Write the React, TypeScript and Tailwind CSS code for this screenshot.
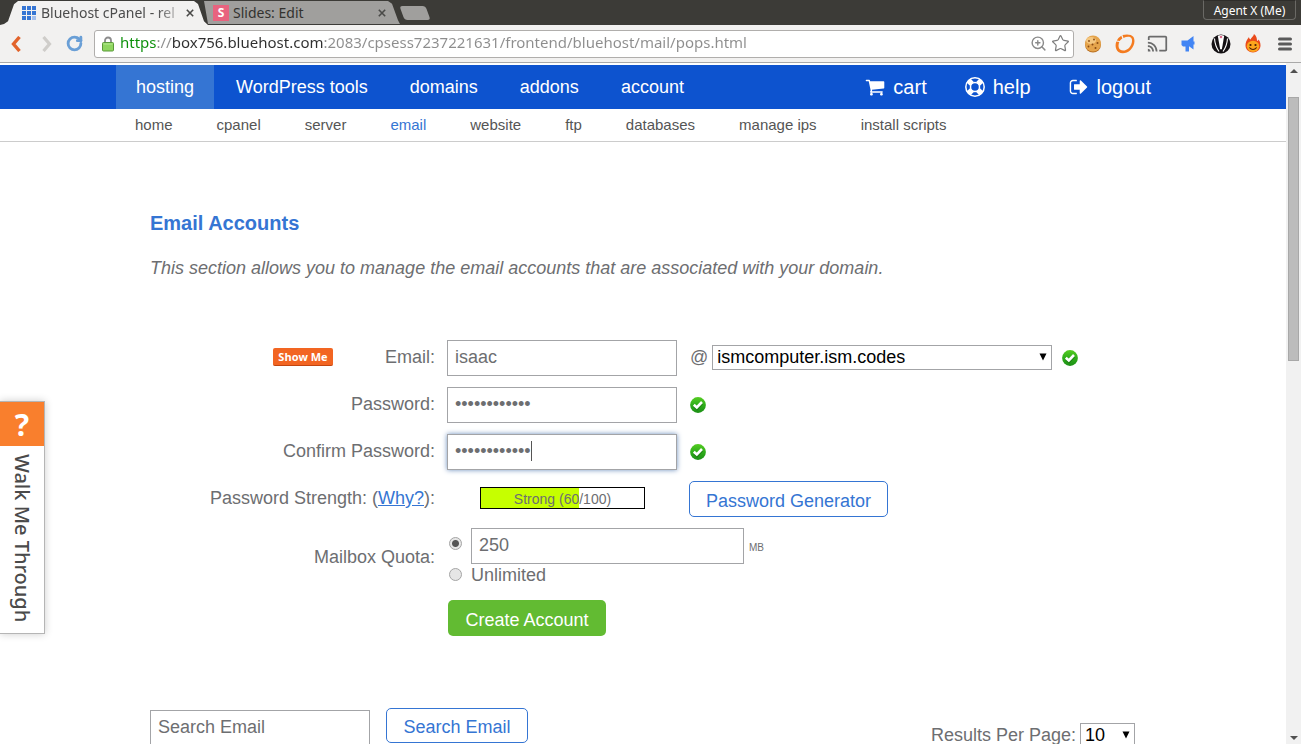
import React from 'react';
import { MdCast } from 'react-icons/md';
import { RotateCw, Star, ZoomIn } from 'lucide-react';

const mainLinks = ['hosting', 'WordPress tools', 'domains', 'addons', 'account'];

const subLinks = [
  'home',
  'cpanel',
  'server',
  'email',
  'website',
  'ftp',
  'databases',
  'manage ips',
  'install scripts',
];

function CartIcon() {
  return (
    <svg viewBox="0 0 1792 1792" className="w-5 h-5" fill="currentColor" aria-hidden="true">
      <path d="M704 1536q0 52-38 90t-90 38-90-38-38-90 38-90 90-38 90 38 38 90zm896 0q0 52-38 90t-90 38-90-38-38-90 38-90 90-38 90 38 38 90zm128-1088v512q0 24-16.500 42.500t-40.500 21.500l-1044 122q13 60 13 70 0 16-24 64h920q26 0 45 19t19 45-19 45-45 19H512q-26 0-45-19t-19-45q0-11 8-31.500t16-36 21.500-40 15.500-29.500L332 384H128q-26 0-45-19t-19-45 19-45 45-19h256q16 0 28.500 6.500t19.500 15.500 13 24.500 8 26 5.500 29.500 4.500 26h1201q26 0 45 19t19 45z" />
    </svg>
  );
}

function HelpIcon() {
  return (
    <svg viewBox="0 0 20 20" className="w-5 h-5" fill="none" aria-hidden="true">
      <circle cx="10" cy="10" r="9.200" stroke="currentColor" strokeWidth="1.500" />
      <circle cx="10" cy="10" r="4.500" stroke="currentColor" strokeWidth="1.500" />
      <g stroke="currentColor" strokeWidth="5.500">
        <path d="M3.500 3.500l3.400 3.400M16.500 3.500l-3.400 3.400M3.500 16.500l3.400-3.400M16.500 16.500l-3.400-3.400" />
      </g>
    </svg>
  );
}

function LogoutIcon() {
  return (
    <svg viewBox="0 0 1792 1792" className="w-5 h-5" fill="currentColor" aria-hidden="true">
      <path d="M704 1440q0 4 1 20t.5 26.500-3 23.500-10 19.500-20.500 6.500h-320q-119 0-203.500-84.500T64 1248V544q0-119 84.500-203.500T352 256h320q13 0 22.500 9.500T704 288q0 4 1 20t.5 26.500-3 23.500-10 19.500T672 384H352q-66 0-113 47t-47 113v704q0 66 47 113t113 47h312l11.500 1 11.500 3 8 5.500 7 9 2 13.500zm928-544q0 26-19 45l-544 544q-19 19-45 19t-45-19-19-45v-288H512q-26 0-45-19t-19-45V704q0-26 19-45t45-19h448V352q0-26 19-45t45-19 45 19l544 544q19 19 19 45z" />
    </svg>
  );
}

function CheckIcon() {
  return (
    <svg viewBox="0 0 16 16" className="w-4 h-4 shrink-0" role="img" aria-label="Valid">
      <defs>
        <linearGradient id="check-green" x1="0" y1="0" x2="0" y2="1">
          <stop offset="0" stopColor="#55cc22" />
          <stop offset="0.5" stopColor="#2fae1a" />
          <stop offset="1" stopColor="#1c8f16" />
        </linearGradient>
      </defs>
      <circle cx="8" cy="8" r="7.900" fill="url(#check-green)" />
      <path d="M4 9l3 2.800 5.300-5.600" stroke="#14690f" strokeWidth="2.600" fill="none" opacity="0.6" />
      <path d="M3.800 7.700l3 2.800 5.200-5.500" stroke="#fff" strokeWidth="2.600" fill="none" />
    </svg>
  );
}

function GridIcon() {
  return (
    <svg viewBox="0 0 14 14" className="w-3.5 h-3.5 shrink-0" fill="#3575d3" aria-hidden="true">
      <path d="M0 0h4v4H0zM5 0h4v4H5zM10 0h4v4h-4zM0 5h4v4H0zM5 5h4v4H5zM10 5h4v4h-4zM0 10h4v4H0zM5 10h4v4H5z" />
      <path d="M10 10h4v4h-4z" fill="#a3bfec" />
    </svg>
  );
}

function CloseIcon() {
  return (
    <svg viewBox="0 0 8 8" className="w-2 h-2" stroke="#4a4a48" strokeWidth="1.600" aria-hidden="true">
      <path d="M0.800 0.800l6.400 6.400M7.200 0.800l-6.400 6.400" />
    </svg>
  );
}

function LockIcon() {
  return (
    <svg viewBox="0 0 12 16" className="w-3 h-4 shrink-0" aria-hidden="true">
      <path d="M3 7V4.500a3 3 0 0 1 6 0V7" fill="none" stroke="#8c8c8c" strokeWidth="1.800" />
      <rect x="0.500" y="6.500" width="11" height="8.500" rx="1" fill="#8fd65f" stroke="#5a9a3a" />
      <path d="M1.500 8h9" stroke="#b8ea94" />
    </svg>
  );
}

function CookieIcon() {
  return (
    <svg viewBox="0 0 18 18" className="w-[18px] h-[18px]" aria-hidden="true">
      <circle cx="9" cy="9.500" r="8" fill="#b96f22" />
      <circle cx="9" cy="8.500" r="8" fill="#e5a44c" />
      <ellipse cx="7" cy="5.500" rx="5" ry="3.500" fill="#f4c780" />
      <g fill="#8a4a14">
        <circle cx="5" cy="6" r="0.900" />
        <circle cx="10" cy="4.500" r="0.900" />
        <circle cx="13.500" cy="8" r="1" />
        <circle cx="8.500" cy="9.500" r="1" />
        <circle cx="4.500" cy="11.500" r="0.900" />
        <circle cx="11.500" cy="13" r="1" />
      </g>
    </svg>
  );
}

function SwirlIcon() {
  return (
    <svg viewBox="0 0 20 20" className="w-5 h-5" aria-hidden="true">
      <path
        fillRule="evenodd"
        fill="#f47b20"
        d="M7.500 1C12 0 16.500.3 18.500 3c2.200 4 .5 9.500-3 13-3.500 3.300-8.500 4.300-12 2C.3 15.500 0 11 1.300 7.500L4.300 8C3.300 10.500 3 13.500 5 15.500c2.500 2 6.500 1 9-1.500 2.700-3 4-7.500 2.300-10C15 2.300 11.500 2.500 8.500 4z"
      />
      <path d="M1.800 6.500Q3.200 3.500 6.300 1.700L7.300 4.500Q5.500 5.500 4.700 7z" fill="#f47b20" />
    </svg>
  );
}

function MegaphoneIcon() {
  return (
    <svg viewBox="0 0 14 16" className="w-3.5 h-4 mr-[2px]" fill="#4285f4" aria-hidden="true">
      <path d="M.5 4.500h6L12.500 0v13.500L8 10.300V15.500H4.500V10.500H2L.5 9z" />
      <path d="M12 5.500h1.500v3H12z" />
    </svg>
  );
}

function BadgerIcon() {
  return (
    <svg viewBox="0 0 20 20" className="w-5 h-5" aria-hidden="true">
      <circle cx="10" cy="10" r="9.500" fill="#141114" />
      <path d="M6.800 1.800L10 1l3.200.8L11 14.500l-1 1.200-1-1.200z" fill="#fff" />
      <path d="M3.500 4.500Q4 12 8 17.500M16.500 4.500Q16 12 12 17.500" stroke="#fff" strokeWidth="1.100" fill="none" />
      <path d="M8.500 3L10 1.500 11.500 3 10 4.500z" fill="#d9587c" />
    </svg>
  );
}

function FlameIcon() {
  return (
    <svg viewBox="0 0 16 19" className="w-4 h-[19px]" aria-hidden="true">
      <path d="M9 0c-.5 2.500-3 3.500-3.500 5.500C4.500 5 4 4 4 3 1.500 6 .5 8.500.5 11.500.5 15.500 4 18.500 8 18.500s7.500-3 7.500-7c0-3-1-5-2-6-.3 1-.8 1.300-1.500 1.500C12 4.500 11.500 1.500 9 0z" fill="#ea4a1b" />
      <ellipse cx="8" cy="12.300" rx="6.200" ry="5.600" fill="#fba51c" />
      <circle cx="5.500" cy="11" r="1.100" fill="#4b1a05" />
      <circle cx="10.500" cy="11" r="1.100" fill="#4b1a05" />
      <path d="M4.300 13.500q3.700 4 7.400 0" stroke="#4b1a05" strokeWidth="1.100" fill="none" />
    </svg>
  );
}

function TabStrip() {
  return (
    <div className="flex h-[25px] bg-[#3c3b37] text-sm">
      <div className="relative z-10 flex items-center w-[208px] shrink-0 pl-[22px] pr-3.5 mt-px bg-[#f2f1f0] text-[#4c4c4c] [clip-path:polygon(0_100%,4px_96%,8px_84%,14px_14%,18px_0,194px_0,198px_12%,204px_84%,208px_100%)]">
        <GridIcon />
        <span className="flex-1 ml-[5px] whitespace-nowrap [mask-image:linear-gradient(to_right,black_80%,transparent)]">
          Bluehost cPanel - rel
        </span>
        <button type="button" aria-label="Close Bluehost cPanel">
          <CloseIcon />
        </button>
      </div>
      <div className="flex items-center w-[196px] shrink-0 -ml-1 pl-[9px] pr-3.5 mt-px mb-px bg-[#a09f9d] text-[#33322f] [clip-path:polygon(0_0,184px_0,188px_12%,194px_84%,196px_100%,4px_100%)]">
        <span className="flex items-center justify-center w-4 h-4 bg-[#e8637f] text-white text-xs font-bold">S</span>
        <span className="flex-1 ml-[4px]">Slides: Edit</span>
        <button type="button" aria-label="Close Slides: Edit">
          <CloseIcon />
        </button>
      </div>
      <button
        type="button"
        aria-label="New tab"
        className="w-[26px] h-3.5 ml-[2px] mt-1.5 rounded-[3px] bg-[#a09f9d] skew-x-[20deg]"
      />
      <button
        type="button"
        className="ml-auto mr-[5px] h-5 w-[93px] shrink-0 pt-[2px] rounded-b border border-t-[#2e2d2a] border-[#6a6965] text-white text-xs"
      >
        Agent X (Me)
      </button>
    </div>
  );
}

function Toolbar() {
  return (
    <div className="flex items-center h-[38px] border-b border-[#a9a9a9] bg-[#f2f1f0]">
      <div className="flex items-center w-[94px] shrink-0 pl-[10px]">
        <button type="button" aria-label="Back">
          <svg viewBox="0 0 12 16" className="w-3 h-4" fill="none" stroke="#e2632b" strokeWidth="3.400">
            <path d="M9.500 1L3.500 8l6 7" />
          </svg>
        </button>
        <button type="button" aria-label="Forward" className="ml-[19px]">
          <svg viewBox="0 0 12 16" className="w-3 h-4" fill="none" stroke="#cfcdca" strokeWidth="3.200">
            <path d="M2.500 1l6 7-6 7" />
          </svg>
        </button>
        <button type="button" aria-label="Reload" className="ml-[13px]">
          <RotateCw size={17} strokeWidth={4} color="#6a9fd6" />
        </button>
      </div>
      <div className="flex flex-1 items-center h-7 pl-[7px] pr-[3px] rounded-[3px] border border-[#b0aeac] bg-white">
        <LockIcon />
        <input
          type="text"
          aria-label="Address"
          defaultValue="https://box756.bluehost.com:2083/cpsess7237221631/frontend/bluehost/mail/pops.html"
          className="flex-1 min-w-0 ml-[6px] pb-[2px] text-[15px] outline-none text-transparent bg-clip-text bg-[linear-gradient(to_right,#0a8f08_36px,#8d8d8d_36px,#8d8d8d_51px,#2f2f2f_51px,#2f2f2f_203px,#8d8d8d_203px)]"
        />
        <button type="button" aria-label="Zoom">
          <ZoomIn size={17} strokeWidth={2} color="#8a8a8a" />
        </button>
        <button type="button" aria-label="Bookmark" className="ml-1">
          <Star size={19} strokeWidth={1.500} color="#7d7d7d" />
        </button>
      </div>
      <div className="flex shrink-0 ml-[3px]">
        <button type="button" aria-label="Cookies" className="flex w-8 h-5 items-center justify-center"><CookieIcon /></button>
        <button type="button" aria-label="Swirl" className="flex w-8 h-5 items-center justify-center"><SwirlIcon /></button>
        <button type="button" aria-label="Cast" className="flex w-8 h-5 items-center justify-center text-[#6b6b6b]"><MdCast size={21} /></button>
        <button type="button" aria-label="Announcements" className="flex w-8 h-5 items-center justify-center"><MegaphoneIcon /></button>
        <button type="button" aria-label="Badger" className="flex w-8 h-5 items-center justify-center"><BadgerIcon /></button>
        <button type="button" aria-label="Flame" className="flex w-8 h-5 items-center justify-center"><FlameIcon /></button>
        <button type="button" aria-label="Menu" className="flex w-8 h-5 items-center justify-center">
          <svg viewBox="0 0 14 14" className="w-3.5 h-3.5" stroke="#5a5a5a" strokeWidth="3" strokeLinecap="round">
            <path d="M1.500 2h11M1.500 7h11M1.500 12h11" />
          </svg>
        </button>
      </div>
    </div>
  );
}

function SiteHeader() {
  return (
    <header className="mt-[2px]">
      <nav aria-label="Main" className="bg-[#0d53cf] text-white">
        <div className="flex w-full max-w-[1054px] h-11 mx-auto">
          <div className="flex gap-[2px] text-lg">
            {mainLinks.map((label, i) => (
              <a
                key={label}
                href="#"
                className={`flex items-center px-5 whitespace-nowrap ${i === 0 ? 'bg-[#3575d3]' : ''}`}
              >
                {label}
              </a>
            ))}
          </div>
          <div className="flex items-center gap-[38px] ml-auto pr-[19px] text-xl">
            <a href="#" className="flex items-center gap-2"><CartIcon />cart</a>
            <a href="#" className="flex items-center gap-2"><HelpIcon />help</a>
            <a href="#" className="flex items-center gap-2"><LogoutIcon />logout</a>
          </div>
        </div>
      </nav>
      <nav aria-label="Hosting" className="border-b border-[#ccc]">
        <div className="flex items-center gap-11 w-full max-w-[1054px] h-8 mx-auto pl-[19px] text-[15px] text-[#555]">
          {subLinks.map((label) => (
            <a key={label} href="#" className={`whitespace-nowrap ${label === 'email' ? 'text-[#3575d3]' : ''}`}>
              {label}
            </a>
          ))}
        </div>
      </nav>
    </header>
  );
}

function SelectArrow() {
  return (
    <svg
      viewBox="0 0 8 8"
      className="absolute right-[5px] top-2 w-2 h-2 pointer-events-none"
      fill="#000"
      aria-hidden="true"
    >
      <path d="M0.500 0.500h7L4 7.500z" />
    </svg>
  );
}

function AccountForm() {
  const field = 'w-[230px] h-9 px-[7px] pb-[2px] border border-[#a3a4a7] bg-white outline-none';
  const radio =
    'appearance-none w-[13px] h-[13px] shrink-0 rounded-full border border-[#a5a5a5] bg-[#e6e6e6] checked:bg-[radial-gradient(circle,#555_3px,#e6e6e6_4px)]';
  const strength = 60;

  return (
    <form className="grid grid-cols-[285px_1fr] items-center gap-x-3 gap-y-[11px] mt-[58px]">
      <div className="flex items-center justify-end pb-[2px]">
        <button
          type="button"
          className="w-[60px] h-[18px] mr-[52px] rounded-[2px] border-b border-[#c24510] bg-[#f26522] text-white text-[11px] leading-4 font-bold font-['Open_Sans',sans-serif]"
        >
          Show Me
        </button>
        <label htmlFor="email">Email:</label>
      </div>
      <div className="flex items-center">
        <input id="email" type="text" defaultValue="isaac" className={field} />
        <span className="ml-[13px] pb-[2px]">@</span>
        <div className="relative w-[340px] ml-[4px] mb-[2px]">
          <select
            aria-label="Domain"
            className="block appearance-none w-full h-[25px] px-1 border border-[#a3a4a7] bg-white text-black leading-[21px]"
          >
            <option>ismcomputer.ism.codes</option>
          </select>
          <SelectArrow />
        </div>
        <span className="ml-[10px]"><CheckIcon /></span>
      </div>

      <label htmlFor="password" className="pb-[2px] text-right">Password:</label>
      <div className="flex items-center gap-[13px]">
        <input id="password" type="password" defaultValue="correcthorse" className={field} />
        <CheckIcon />
      </div>

      <label htmlFor="confirm" className="pb-[2px] text-right">Confirm Password:</label>
      <div className="flex items-center gap-[13px]">
        <div className="relative">
          <input
            id="confirm"
            type="password"
            defaultValue="correcthorse"
            className={`${field} block shadow-[0_0_5px_#6c8fbd]`}
          />
          <span className="absolute left-[84px] top-[7px] w-px h-5 bg-[#555]" />
        </div>
        <CheckIcon />
      </div>

      <div className="pb-[2px] text-right">
        Password Strength: (<a href="#" className="text-[#3575d3] underline">Why?</a>):
      </div>
      <div className="flex items-center pl-[33px]">
        <div className="relative w-[165px] h-[22px] mb-[2px] border border-black text-sm leading-[22px] text-center">
          <div className="absolute inset-y-0 left-0 bg-[#c6ff00]" style={{ width: `${strength}%` }} />
          <span className="relative">Strong ({strength}/100)</span>
        </div>
        <button
          type="button"
          className="w-[199px] h-9 ml-11 pt-[3px] rounded-[5px] border border-[#3575d3] bg-white text-[#3575d3]"
        >
          Password Generator
        </button>
      </div>

      <div className="text-right">Mailbox Quota:</div>
      <div className="pl-[2px]">
        <div className="flex">
          <input type="radio" name="quota" aria-label="Limited" defaultChecked className={`${radio} mt-[9px]`} />
          <input
            type="text"
            aria-label="Mailbox quota in MB"
            defaultValue="250"
            className="w-[273px] h-9 ml-[9px] px-[7px] pb-[2px] border border-[#a3a4a7] bg-white"
          />
          <span className="ml-[5px] mt-[13px] text-[10px] leading-3.5">MB</span>
        </div>
        <label className="flex items-center gap-[9px] h-[22px]">
          <input type="radio" name="quota" className={`${radio} mb-[2px]`} />
          Unlimited
        </label>
      </div>

      <div className="col-start-2 pl-px pt-[3px]">
        <button type="submit" className="block w-[158px] h-9 pt-[3px] rounded-[5px] bg-[#62bb32] text-white">
          Create Account
        </button>
      </div>
    </form>
  );
}

function SearchBar() {
  return (
    <div className="flex items-start mt-[72px] pr-px">
      <input
        type="search"
        aria-label="Search Email"
        placeholder="Search Email"
        className="w-[220px] h-9 mt-[2px] px-[7px] pb-[2px] border border-[#a3a4a7] placeholder:text-[#6d6e71]"
      />
      <button
        type="button"
        className="w-[142px] h-[35px] ml-4 pt-[3px] rounded-[5px] border border-[#3575d3] bg-white text-[#3575d3]"
      >
        Search Email
      </button>
      <label htmlFor="per-page" className="ml-auto mt-[13px]">Results Per Page:</label>
      <div className="relative w-[55px] ml-[4px] mt-[15px]">
        <select
          id="per-page"
          className="block appearance-none w-full h-[25px] px-1 border border-[#a3a4a7] bg-white text-black leading-[21px]"
        >
          <option>10</option>
        </select>
        <SelectArrow />
      </div>
    </div>
  );
}

function WalkMe() {
  return (
    <button
      type="button"
      className="absolute left-0 top-[338px] w-[45px] flex flex-col items-center border border-l-0 border-[#b5b5b5] bg-white shadow-[0_0_8px_rgba(0,0,0,0.2)] font-['Noto_Sans',sans-serif]"
    >
      <span className="flex items-center justify-center w-full h-11 bg-[#f97f2d] text-white text-[30px] font-bold">?</span>
      <span className="h-[187px] pt-2 text-left text-xl font-medium text-[#4a4a4a] [writing-mode:vertical-rl]">
        Walk Me Through
      </span>
    </button>
  );
}

function Scrollbar() {
  return (
    <div aria-hidden="true" className="flex flex-col items-center w-[15px] shrink-0 pt-1.5 pb-1 bg-[#f1f1f1]">
      <svg viewBox="0 0 8 4" className="w-2 h-1" fill="#505050">
        <path d="M0 4L4 0l4 4z" />
      </svg>
      <div className="w-[11px] h-[264px] mt-6 border border-[#a8a8a8] bg-[#bcbcbc]" />
      <svg viewBox="0 0 8 4" className="w-2 h-1 mt-auto" fill="#505050">
        <path d="M0 0l4 4 4-4z" />
      </svg>
    </div>
  );
}

export default function App() {
  return (
    <div className="flex flex-col h-screen overflow-hidden bg-white">
      <div className="shrink-0 font-['Noto_Sans',sans-serif]">
        <TabStrip />
        <Toolbar />
      </div>
      <div className="relative flex flex-1 min-h-0 font-['Liberation_Sans',Arial,sans-serif]">
        <div className="flex-1 min-w-0 overflow-hidden">
          <SiteHeader />
          <main className="w-full max-w-[1054px] mx-auto px-[34px] pt-[67px] text-lg text-[#6d6e71]">
            <h1 className="text-xl leading-7 font-bold text-[#3575d3]">Email Accounts</h1>
            <p className="mt-[17px] italic">This section allows you to manage the email accounts that are associated with your domain.</p>
            <AccountForm />
            <SearchBar />
          </main>
        </div>
        <WalkMe />
        <Scrollbar />
      </div>
    </div>
  );
}
